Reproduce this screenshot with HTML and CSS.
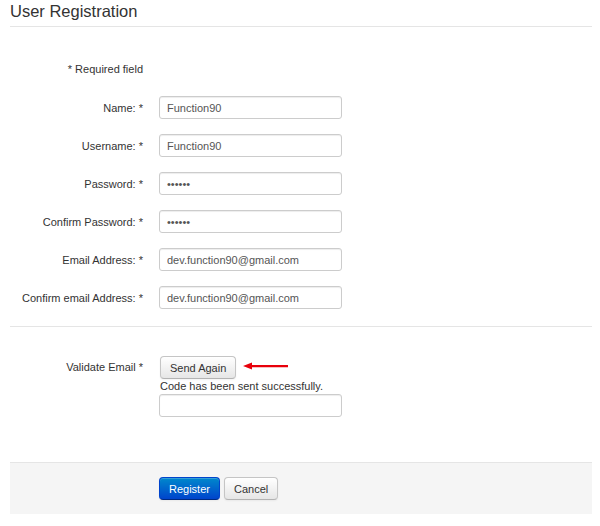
FILE: index.html
```html
<!DOCTYPE html>
<html lang="en">
<head>
    <meta charset="UTF-8">
    <meta name="viewport" content="width=device-width, initial-scale=1.0">
    <title>User Registration</title>
    <link rel="stylesheet" href="styles.css">
</head>
<body>
    <h1>User Registration</h1>
    <form class="reg-form">
        <div class="form-row note-row">
            <span class="form-label">* Required field</span>
        </div>
        <div class="form-row">
            <label class="form-label">Name: *</label>
            <input type="text" class="form-input" value="Function90">
        </div>
        <div class="form-row">
            <label class="form-label">Username: *</label>
            <input type="text" class="form-input" value="Function90">
        </div>
        <div class="form-row">
            <label class="form-label">Password: *</label>
            <input type="password" class="form-input" value="secret">
        </div>
        <div class="form-row">
            <label class="form-label">Confirm Password: *</label>
            <input type="password" class="form-input" value="secret">
        </div>
        <div class="form-row">
            <label class="form-label">Email Address: *</label>
            <input type="text" class="form-input" value="dev.function90@gmail.com">
        </div>
        <div class="form-row">
            <label class="form-label">Confirm email Address: *</label>
            <input type="text" class="form-input" value="dev.function90@gmail.com">
        </div>

        <div class="validate-section">
            <div class="form-row validate-row">
                <label class="form-label">Validate Email *</label>
                <div class="validate-controls">
                    <div class="send-line">
                        <button type="button" class="btn">Send Again</button>
                        <svg class="arrow" width="46" height="8" viewBox="0 0 46 8">
                            <path d="M0 4 L9 0.5 L9 3 L45 3 L45 5.2 L9 5.2 L9 7.5 Z" fill="#e8000b"/>
                        </svg>
                    </div>
                    <div class="sent-msg">Code has been sent successfully.</div>
                    <input type="text" class="form-input">
                </div>
            </div>
        </div>

        <div class="form-actions">
            <button type="submit" class="btn btn-primary">Register</button>
            <button type="button" class="btn">Cancel</button>
        </div>
    </form>
</body>
</html>
```

FILE: styles.css
```css
body {
    font-family: "Liberation Sans", Arial, sans-serif;
    font-size: 11px;
    color: #333;
    margin: 0;
    padding: 0 8px 0 10px;
}
h1 {
    font-size: 16.5px;
    font-weight: normal;
    color: #333;
    margin: 0;
    padding: 3px 0 6px;
    line-height: 17px;
    border-bottom: 1px solid #e5e5e5;
}
.reg-form {
    margin: 0;
}
.form-row {
    display: flex;
    align-items: center;
    margin-bottom: 15px;
}
.note-row {
    margin-top: 35px;
    margin-bottom: 20px;
    line-height: 14px;
}
.form-label {
    width: 133px;
    text-align: right;
    margin-right: 16px;
    flex-shrink: 0;
}
.form-input {
    width: 183px;
    height: 23px;
    box-sizing: border-box;
    border: 1px solid #ccc;
    border-radius: 3px;
    padding: 0 7px;
    font-family: inherit;
    font-size: 11px;
    color: #555;
    box-shadow: inset 0 1px 1px rgba(0, 0, 0, 0.075);
    margin: 0;
}
.validate-section {
    border-top: 1px solid #e5e5e5;
    margin-top: 17px;
    padding-top: 29px;
    padding-bottom: 45px;
}
.validate-row {
    align-items: flex-start;
    margin-bottom: 0;
}
.validate-row .form-label {
    line-height: 23px;
}
.validate-controls {
    display: flex;
    flex-direction: column;
    align-items: flex-start;
}
.send-line {
    display: flex;
    align-items: center;
    margin-left: 1px;
}
.arrow {
    margin-left: 7px;
    margin-top: -4px;
}
.sent-msg {
    line-height: 14px;
    margin: 0 0 1px 1px;
}
.btn {
    font-family: inherit;
    font-size: 11px;
    color: #333;
    height: 23px;
    padding: 0 9px;
    border: 1px solid #c5c5c5;
    border-bottom-color: #b3b3b3;
    border-radius: 4px;
    background: linear-gradient(#fff, #e6e6e6);
    box-shadow: inset 0 1px 0 rgba(255, 255, 255, 0.2), 0 1px 2px rgba(0, 0, 0, 0.05);
    cursor: pointer;
}
.btn-primary {
    color: #fff;
    background: linear-gradient(#0088cc, #0044cc);
    border-color: #0044cc #0044cc #002a80;
}
.form-actions {
    background-color: #f5f5f5;
    border-top: 1px solid #e5e5e5;
    padding: 14px 0 14px 149px;
    display: flex;
    gap: 4px;
}
```
